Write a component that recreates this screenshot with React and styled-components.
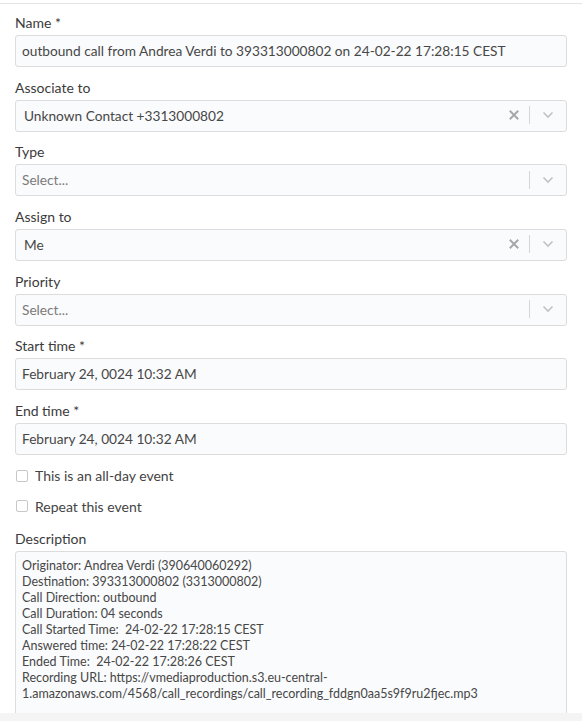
import React from "react";
import styled, { createGlobalStyle } from "styled-components";

const Global = createGlobalStyle`
  html, body { margin: 0; padding: 0; background: #fff; }
  body { font-family: "Lato", "Open Sans", sans-serif; color: #333; }
`;

const Page = styled.div`
  height: 721px;
  display: flex;
  flex-direction: column;
  overflow: hidden;
`;

const Content = styled.div`
  flex: 1;
  min-height: 0;
  overflow: hidden;
  margin-top: 3px;
  border-top: 1px solid #e4e4e4;
`;

const Form = styled.form`
  display: flex;
  flex-direction: column;
  gap: 10.67px;
  padding: 9px 15px 0 15px;
`;

const Field = styled.div`
  display: flex;
  flex-direction: column;
  margin-top: ${(p) => p.$offset || 0}px;
`;

const Label = styled.label`
  font-size: 14px;
  line-height: 20px;
  height: 20px;
  margin-bottom: 2px;
  color: #3b3b3b;
`;

const Input = styled.div`
  box-sizing: border-box;
  height: 32px;
  border: 1px solid #dcdcdc;
  border-radius: 3px;
  background: #fafbfc;
  display: flex;
  align-items: center;
  padding: 0 0 1px ${(p) => p.$pad || 6}px;
  font-size: 13.7px;
  color: ${(p) => (p.$placeholder ? "#7a7a7a" : "#474747")};
`;

const Value = styled.span`
  flex: 1;
  white-space: nowrap;
  overflow: hidden;
`;

const Indicators = styled.div`
  display: flex;
  align-items: center;
  height: 100%;
`;

const ClearBtn = styled.span`
  width: 30px;
  display: flex;
  align-items: center;
  justify-content: center;
`;

const Sep = styled.span`
  width: 1px;
  height: 18px;
  background: #d6d6d6;
`;

const Chevron = styled.span`
  width: 36px;
  display: flex;
  align-items: center;
  justify-content: center;
`;

const CheckRow = styled.label`
  display: flex;
  align-items: center;
  height: 20px;
  gap: 7px;
  font-size: 14px;
  color: #444;
  padding-left: 1px;
`;

const Box = styled.span`
  box-sizing: border-box;
  width: 12px;
  height: 12px;
  border: 1px solid #c8c8c8;
  border-radius: 2px;
  background: #fff;
`;

const TextArea = styled.div`
  box-sizing: border-box;
  height: 200px;
  border: 1px solid #dcdcdc;
  border-radius: 3px;
  background: #fafbfc;
  padding: 6px 6px;
  font-size: 12.5px;
  line-height: 16px;
  color: #474747;
  white-space: pre;
`;

const Footer = styled.div`
  height: 8px;
  flex-shrink: 0;
  background: #f4f4f4;
`;

const XIcon = () => (
  <svg width="10" height="10" viewBox="0 0 10 10">
    <path d="M1.5 1.5 L8.5 8.5 M8.5 1.5 L1.5 8.5" stroke="#a8a8a8" strokeWidth="2" strokeLinecap="square" />
  </svg>
);

const DownIcon = () => (
  <svg width="12" height="8" viewBox="0 0 12 8">
    <path d="M1.5 1.5 L6 6 L10.5 1.5" stroke="#c2c2c2" strokeWidth="1.6" fill="none" />
  </svg>
);

const Select = ({ value, clearable }) => (
  <Input $placeholder={!value} $pad={value ? 8 : 6}>
    <Value>{value || "Select..."}</Value>
    <Indicators>
      {clearable && (
        <ClearBtn>
          <XIcon />
        </ClearBtn>
      )}
      <Sep />
      <Chevron>
        <DownIcon />
      </Chevron>
    </Indicators>
  </Input>
);

const description = [
  "Originator: Andrea Verdi (390640060292)",
  "Destination: 393313000802 (3313000802)",
  "Call Direction: outbound",
  "Call Duration: 04 seconds",
  "Call Started Time:  24-02-22 17:28:15 CEST",
  "Answered time: 24-02-22 17:28:22 CEST",
  "Ended Time:  24-02-22 17:28:26 CEST",
  "Recording URL: https://vmediaproduction.s3.eu-central-",
  "1.amazonaws.com/4568/call_recordings/call_recording_fddgn0aa5s9f9ru2fjec.mp3",
].join("\n");

export default function App() {
  return (
    <Page>
      <Global />
      <Content>
        <Form>
          <Field>
            <Label>Name *</Label>
            <Input>outbound call from Andrea Verdi to 393313000802 on 24-02-22 17:28:15 CEST</Input>
          </Field>
          <Field>
            <Label>Associate to</Label>
            <Select value="Unknown Contact +3313000802" clearable />
          </Field>
          <Field>
            <Label>Type</Label>
            <Select />
          </Field>
          <Field>
            <Label>Assign to</Label>
            <Select value="Me" clearable />
          </Field>
          <Field>
            <Label>Priority</Label>
            <Select />
          </Field>
          <Field>
            <Label>Start time *</Label>
            <Input>February 24, 0024 10:32 AM</Input>
          </Field>
          <Field>
            <Label>End time *</Label>
            <Input>February 24, 0024 10:32 AM</Input>
          </Field>
          <CheckRow>
            <Box />
            This is an all-day event
          </CheckRow>
          <CheckRow>
            <Box />
            Repeat this event
          </CheckRow>
          <Field $offset={2}>
            <Label>Description</Label>
            <TextArea>{description}</TextArea>
          </Field>
        </Form>
      </Content>
      <Footer />
    </Page>
  );
}
